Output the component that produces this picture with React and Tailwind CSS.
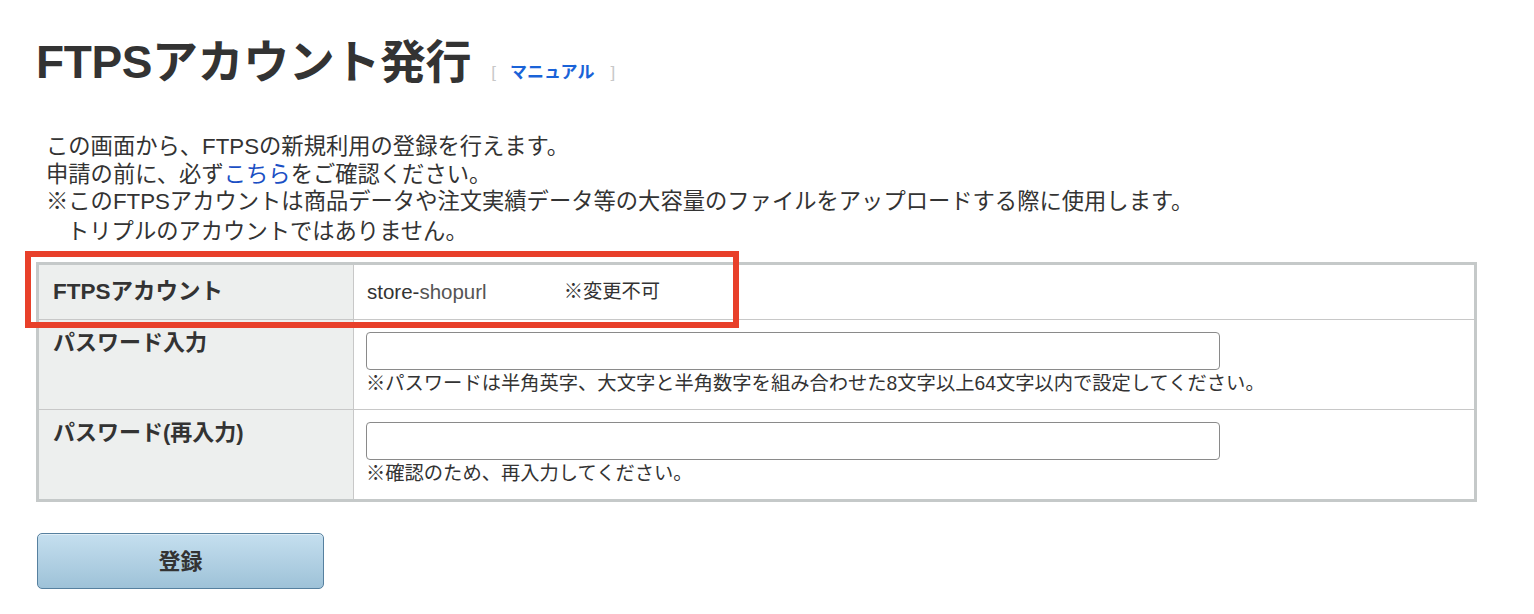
export default function App() {
  const font = { fontFamily: '"Liberation Sans", "Noto Sans CJK JP", sans-serif' };
  return (
    <div className="w-[1534px] h-[614px] bg-white text-[#333] overflow-hidden" style={font}>
      <div className="pl-[36px] pt-[34px]">
        {/* heading */}
        <div className="flex items-baseline">
          <h1 className="text-[46px] font-bold leading-[56px] tracking-[-0.4px] text-[#333]">FTPSアカウント発行</h1>
          <div className="ml-[20px] flex items-baseline text-[17px] leading-none">
            <span className="text-[#c8c8c8]">[</span>
            <a className="ml-[14px] mr-[16px] font-bold text-[#1a63d8]">マニュアル</a>
            <span className="text-[#c8c8c8]">]</span>
          </div>
        </div>

        {/* intro */}
        <div className="mt-[43px] pl-[10px] text-[22.3px] leading-[27.5px]">
          <p>この画面から、FTPSの新規利用の登録を行えます。</p>
          <p>
            申請の前に、必ず<a className="text-[#1a4fc4]">こちら</a>をご確認ください。
          </p>
          <p>※このFTPSアカウントは商品データや注文実績データ等の大容量のファイルをアップロードする際に使用します。</p>
          <p className="pl-[21px] mt-[2px]">トリプルのアカウントではありません。</p>
        </div>

        {/* form table */}
        <div className="relative mt-[17px] w-[1441px]">
          <div className="border-[3px] border-[#c5c9c9]">
            <div className="flex h-[54px]">
              <div className="w-[314px] shrink-0 bg-[#edefee] flex items-center pl-[14px] text-[22.5px] font-bold">
                FTPSアカウント
              </div>
              <div className="flex-1 border-l border-[#c8c8c8] flex items-center pl-[13px] text-[19.3px]">
                <span className="text-[20.5px]">
                  store-<span className="text-[#555]">shopurl</span>
                </span>
                <span className="ml-[77px]">※変更不可</span>
              </div>
            </div>

            <div className="flex h-[90px] border-t border-[#c8c8c8]">
              <div className="w-[314px] shrink-0 bg-[#edefee] pl-[14px] pt-[9px] text-[22px] font-bold leading-[28px]">
                パスワード入力
              </div>
              <div className="flex-1 border-l border-[#c8c8c8] pl-[12px] pt-[12px]">
                <input type="password" className="block w-[854px] h-[38px] border border-[#8a8a8a] rounded-[4px] bg-white" />
                <p className="mt-[2px] text-[19.3px] leading-[24px]">
                  ※パスワードは半角英字、大文字と半角数字を組み合わせた8文字以上64文字以内で設定してください。
                </p>
              </div>
            </div>

            <div className="flex h-[90px] border-t border-[#c8c8c8]">
              <div className="w-[314px] shrink-0 bg-[#edefee] pl-[14px] pt-[9px] text-[22px] font-bold leading-[28px]">
                パスワード(再入力)
              </div>
              <div className="flex-1 border-l border-[#c8c8c8] pl-[12px] pt-[12px]">
                <input type="password" className="block w-[854px] h-[38px] border border-[#8a8a8a] rounded-[4px] bg-white" />
                <p className="mt-[2px] text-[19.3px] leading-[24px]">※確認のため、再入力してください。</p>
              </div>
            </div>
          </div>

          {/* highlight frame over the first row */}
          <div className="absolute left-[-11px] top-[-11px] w-[714px] h-[77px] border-[6px] border-[#e8402a] pointer-events-none" />
        </div>

        {/* submit */}
        <button className="mt-[31px] ml-[1px] w-[287px] h-[56px] rounded-[5px] border border-[#56809f] bg-gradient-to-b from-[#c5dfef] to-[#9ec2d8] text-[22px] font-bold text-[#333] shadow-[inset_0_1px_0_rgba(255,255,255,0.5)]">
          登録
        </button>
      </div>
    </div>
  );
}
